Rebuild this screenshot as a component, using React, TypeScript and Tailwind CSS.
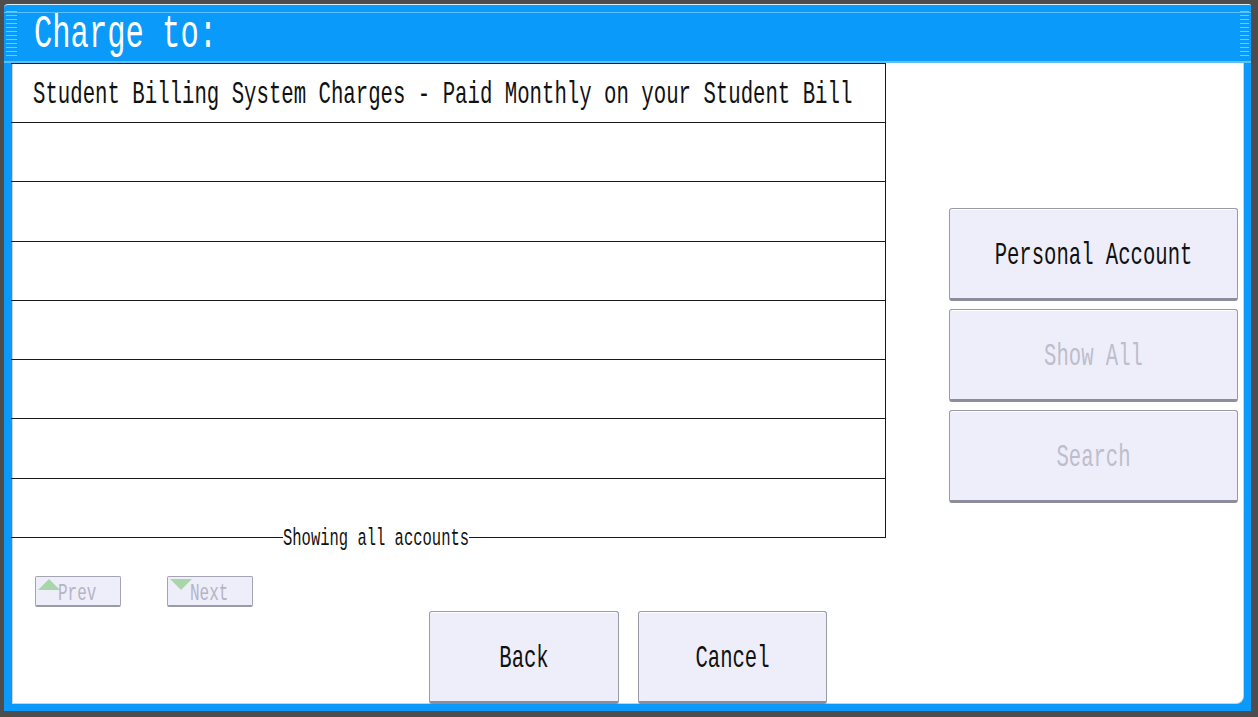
const font = { fontFamily: '"Liberation Mono", "DejaVu Sans Mono", monospace' };

const Tall = ({ children, className = "" }: { children: React.ReactNode; className?: string }) => (
  <span className={`inline-block scale-y-[1.5] whitespace-pre ${className}`}>{children}</span>
);

const BigButton = ({ label, disabled }: { label: string; disabled?: boolean }) => (
  <button
    className={`flex h-[93px] w-full items-center justify-center rounded-[3px] border border-[#9a9aa8] border-b-[3px] border-b-[#8c8c9c] bg-[#eeeefb] text-[20.6px] shadow-[inset_0_1px_0_#ffffff] ${
      disabled ? "text-[#bdbdcc]" : "text-[#111]"
    }`}
  >
    <Tall className="translate-y-[4px]">{label}</Tall>
  </button>
);

const PagerButton = ({ label, up }: { label: string; up?: boolean }) => (
  <button className="relative flex h-[31px] w-[86px] items-center rounded-[2px] border border-[#a4a4b2] border-b-[2px] border-b-[#9a9aa8] bg-[#eeeefb] pl-[22px] text-[16px] text-[#b4b4c4]">
    <span
      className={`absolute left-[2px] top-[2px] h-0 w-0 border-l-[11px] border-r-[11px] border-l-transparent border-r-transparent ${
        up ? "border-b-[11px] border-b-[#a9d6a9]" : "border-t-[11px] border-t-[#a9d6a9]"
      }`}
    />
    <Tall className="translate-y-[3px]">{label}</Tall>
  </button>
);

export default function App() {
  const rows = Array.from({ length: 7 });
  return (
    <div className="h-[717px] w-[1258px] bg-[#4d4d4d] pb-[6px] pl-[4px] pr-[7px] pt-[4px]" style={font}>
      <div className="flex h-full flex-col rounded-tl-[4px] rounded-tr-[2px] border-t border-t-[#d8efff] bg-[#0a9af9]">
        {/* title bar */}
        <div className="relative flex h-[58px] shrink-0 items-center border-b-[2px] border-b-[#5cc0ff] pl-[30px]">
          <div className="absolute left-[2px] top-[6px] h-[45px] w-[11px] bg-[repeating-linear-gradient(180deg,#6cc8ff_0px,#6cc8ff_1px,transparent_1px,transparent_4px)]" />
          <div className="absolute right-[2px] top-[6px] h-[45px] w-[9px] bg-[repeating-linear-gradient(180deg,#6cc8ff_0px,#6cc8ff_1px,transparent_1px,transparent_4px)]" />
          <div className="absolute left-0 right-0 top-[7px] h-px bg-[#5cc0ff]" />
          <Tall className="translate-y-[2px] text-[30.5px] leading-none text-white">Charge to:</Tall>
        </div>

        {/* content */}
        <div className="ml-[8px] mr-[7px] mb-[7px] flex min-h-0 flex-1 flex-col rounded-br-[8px] border-l border-r border-b border-[#c8d4de] bg-white">
          <div className="flex shrink-0">
            <div className="w-[875px] -ml-[2px]">
              <div className="flex h-[59px] items-center border-t border-r border-[#1a1a1a] pl-[22px] text-[20.7px] text-[#111]">
                <Tall className="translate-y-[2px]">Student Billing System Charges - Paid Monthly on your Student Bill</Tall>
              </div>
              {rows.map((_, i) => (
                <div key={i} className="h-[59.3px] border-t border-r border-[#1a1a1a]" />
              ))}
              <div className="relative h-px bg-[#1a1a1a]">
                <span className="absolute left-[272px] top-[-9px] bg-white text-[15.5px] leading-none text-[#111]">
                  <Tall className="translate-y-[4px]">Showing all accounts</Tall>
                </span>
              </div>
            </div>
            <div className="ml-[63px] mt-[145px] flex w-[289px] flex-col gap-[8px]">
              <BigButton label="Personal Account" />
              <BigButton label="Show All" disabled />
              <BigButton label="Search" disabled />
            </div>
          </div>

          <div className="ml-[22px] mt-[38px] flex shrink-0 gap-[46px]">
            <PagerButton label="Prev" up />
            <PagerButton label="Next" />
          </div>

          <div className="ml-[416px] mt-[4px] flex shrink-0 gap-[19px]">
            <div className="w-[190px]">
              <BigButton label="Back" />
            </div>
            <div className="w-[189px]">
              <BigButton label="Cancel" />
            </div>
          </div>
        </div>
      </div>
    </div>
  );
}
